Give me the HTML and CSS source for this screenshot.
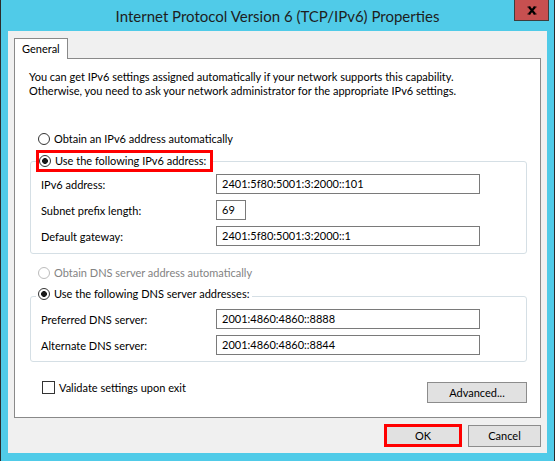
FILE: index.html
```html
<!DOCTYPE html>
<html>
<head>
    <title>Internet Protocol Version 6 (TCP/IPv6) Properties</title>
    <link rel="stylesheet" href="styles.css">
</head>
<body>
    <div class="window">
        <div class="titlebar">
            <span></span>
            <span class="title">Internet Protocol Version 6 (TCP/IPv6) Properties</span>
            <button class="close-button" title="Close">
                <svg width="10" height="9" viewBox="0 0 10 9">
                    <path d="M2 1 L8 8 M8 1 L2 8" stroke="#000" stroke-width="2.2" fill="none"/>
                    <path d="M0.5 1 H3.5 M6.5 1 H9.5 M0.5 8 H3.5 M6.5 8 H9.5" stroke="#000" stroke-width="1.2"/>
                </svg>
            </button>
        </div>

        <div class="client">
            <div class="tabs">
                <div class="tab">General</div>
            </div>

            <div class="tab-page">
                <p class="intro">You can get IPv6 settings assigned automatically if your network supports this capability.<br>Otherwise, you need to ask your network administrator for the appropriate IPv6 settings.</p>

                <div class="option first"><span class="radio"></span>Obtain an IPv6 address automatically</div>

                <fieldset class="group">
                    <legend><span class="option marked"><span class="radio checked"></span>Use the following IPv6 address:</span></legend>
                    <div class="field">
                        <span class="field-label">IPv6 address:</span>
                        <span class="textbox">2401:5f80:5001:3:2000::101</span>
                    </div>
                    <div class="field">
                        <span class="field-label">Subnet prefix length:</span>
                        <span class="textbox short">69</span>
                    </div>
                    <div class="field">
                        <span class="field-label">Default gateway:</span>
                        <span class="textbox">2401:5f80:5001:3:2000::1</span>
                    </div>
                </fieldset>

                <div class="option disabled"><span class="radio"></span>Obtain DNS server address automatically</div>

                <fieldset class="group dns">
                    <legend><span class="option plain"><span class="radio checked"></span>Use the following DNS server addresses:</span></legend>
                    <div class="field">
                        <span class="field-label">Preferred DNS server:</span>
                        <span class="textbox">2001:4860:4860::8888</span>
                    </div>
                    <div class="field">
                        <span class="field-label">Alternate DNS server:</span>
                        <span class="textbox">2001:4860:4860::8844</span>
                    </div>
                </fieldset>

                <div class="footer-row">
                    <div class="check-option"><span class="checkbox"></span>Validate settings upon exit</div>
                    <button class="button advanced">Advanced...</button>
                </div>
            </div>

            <div class="dialog-buttons">
                <button class="button ok">OK</button>
                <button class="button cancel">Cancel</button>
            </div>
        </div>
    </div>
</body>
</html>
```

FILE: styles.css
```css
/* Windows 8 style dialog */
html,
body {
    margin: 0;
    padding: 0;
}

body {
    font-family: Lato, "Liberation Sans", sans-serif;
    font-size: 11px;
    color: #000;
}

.window {
    width: 555px;
    height: 461px;
    box-sizing: border-box;
    background-color: #50cbe8;
    border-left: 1px solid #2b2b2b;
    border-right: 1px solid #2b2b2b;
    padding: 0 7px 8px 7px;
    display: flex;
    flex-direction: column;
}

/* Title bar */
.titlebar {
    height: 31px;
    margin: 0 -7px;
    display: grid;
    grid-template-columns: 1fr auto 1fr;
    align-items: center;
}

.title {
    font-size: 15px;
    color: #1e1e1e;
}

.close-button {
    justify-self: end;
    align-self: start;
    width: 35px;
    height: 21px;
    margin: 0 5px 0 0;
    padding: 0;
    background-color: #c75050;
    border: 1px solid #3d3d3d;
    border-top: none;
    display: flex;
    align-items: center;
    justify-content: center;
}

/* Client area */
.client {
    flex: 1;
    background-color: #f0f0f0;
    padding: 7px 6px 6px 6px;
    display: flex;
    flex-direction: column;
}

.tabs {
    display: flex;
    height: 20px;
}

.tab {
    position: relative;
    z-index: 1;
    height: 21px;
    box-sizing: border-box;
    padding: 0 7px 2px 7px;
    background-color: #fff;
    border: 1px solid #898989;
    border-bottom: none;
    display: flex;
    align-items: center;
}

.tab-page {
    flex: 1;
    background-color: #fff;
    border: 1px solid #898989;
    padding: 11px 13px 0 15px;
}

.intro {
    margin: 0 0 0 -1px;
    line-height: 14px;
}

/* Radio options */
.option {
    display: flex;
    align-items: center;
    height: 16px;
    line-height: 16px;
    white-space: nowrap;
}

.option.first {
    margin: 33px 0 0 8px;
}

.option.disabled {
    margin: 11px 0 0 8px;
    color: #838383;
}

.option.disabled .radio {
    border-color: #bcbcbc;
}

.option.marked {
    border: 3px solid #ff0000;
    padding: 0 4px 0 0;
}

.option.plain {
    padding: 0 3px 4px 2px;
}

.radio {
    width: 12px;
    height: 12px;
    box-sizing: border-box;
    border: 1px solid #333;
    border-radius: 50%;
    background-color: #fff;
    margin-right: 4px;
    flex-shrink: 0;
}

.radio.checked {
    background: radial-gradient(circle, #1b1b1b 0, #1b1b1b 2.6px, #fff 3.2px);
}

/* Group boxes */
.group {
    margin: 3px 0 0 0;
    padding: 2px 10px 7px 10px;
    border: 1px solid #d5dfe5;
    border-radius: 3px;
    display: flex;
    flex-direction: column;
    gap: 6px;
}

.group legend {
    padding: 0;
    margin-left: -5px;
}

.group.dns {
    margin-top: 5px;
    padding-top: 3px;
    padding-bottom: 6px;
}

.field {
    display: flex;
    align-items: center;
    height: 20px;
}

.field-label {
    width: 175px;
    flex-shrink: 0;
}

.textbox {
    width: 264px;
    height: 20px;
    box-sizing: border-box;
    border: 1px solid #7a7a7a;
    padding: 0 5px;
    line-height: 18px;
}

.textbox.short {
    width: 30px;
}

/* Footer */
.footer-row {
    margin-top: 19px;
    display: flex;
    justify-content: space-between;
    align-items: flex-start;
}

.check-option {
    display: flex;
    align-items: center;
    margin-left: 12px;
    height: 13px;
}

.checkbox {
    width: 13px;
    height: 13px;
    box-sizing: border-box;
    border: 1px solid #333;
    background-color: #fff;
    margin-right: 4px;
}

.button {
    font-family: Lato, "Liberation Sans", sans-serif;
    font-size: 11px;
    color: #000;
    background-color: #e1e1e1;
    border: 1px solid #8c8c8c;
    padding: 0;
    height: 22px;
}

.button.advanced {
    width: 100px;
    height: 21px;
    margin-top: 1px;
}

.dialog-buttons {
    margin-top: 6px;
    height: 23px;
    display: flex;
    justify-content: flex-end;
    align-items: center;
    gap: 6px;
}

.button.ok {
    width: 78px;
    height: 23px;
    border: 3px solid #ff0000;
}

.button.cancel {
    width: 73px;
}
```
